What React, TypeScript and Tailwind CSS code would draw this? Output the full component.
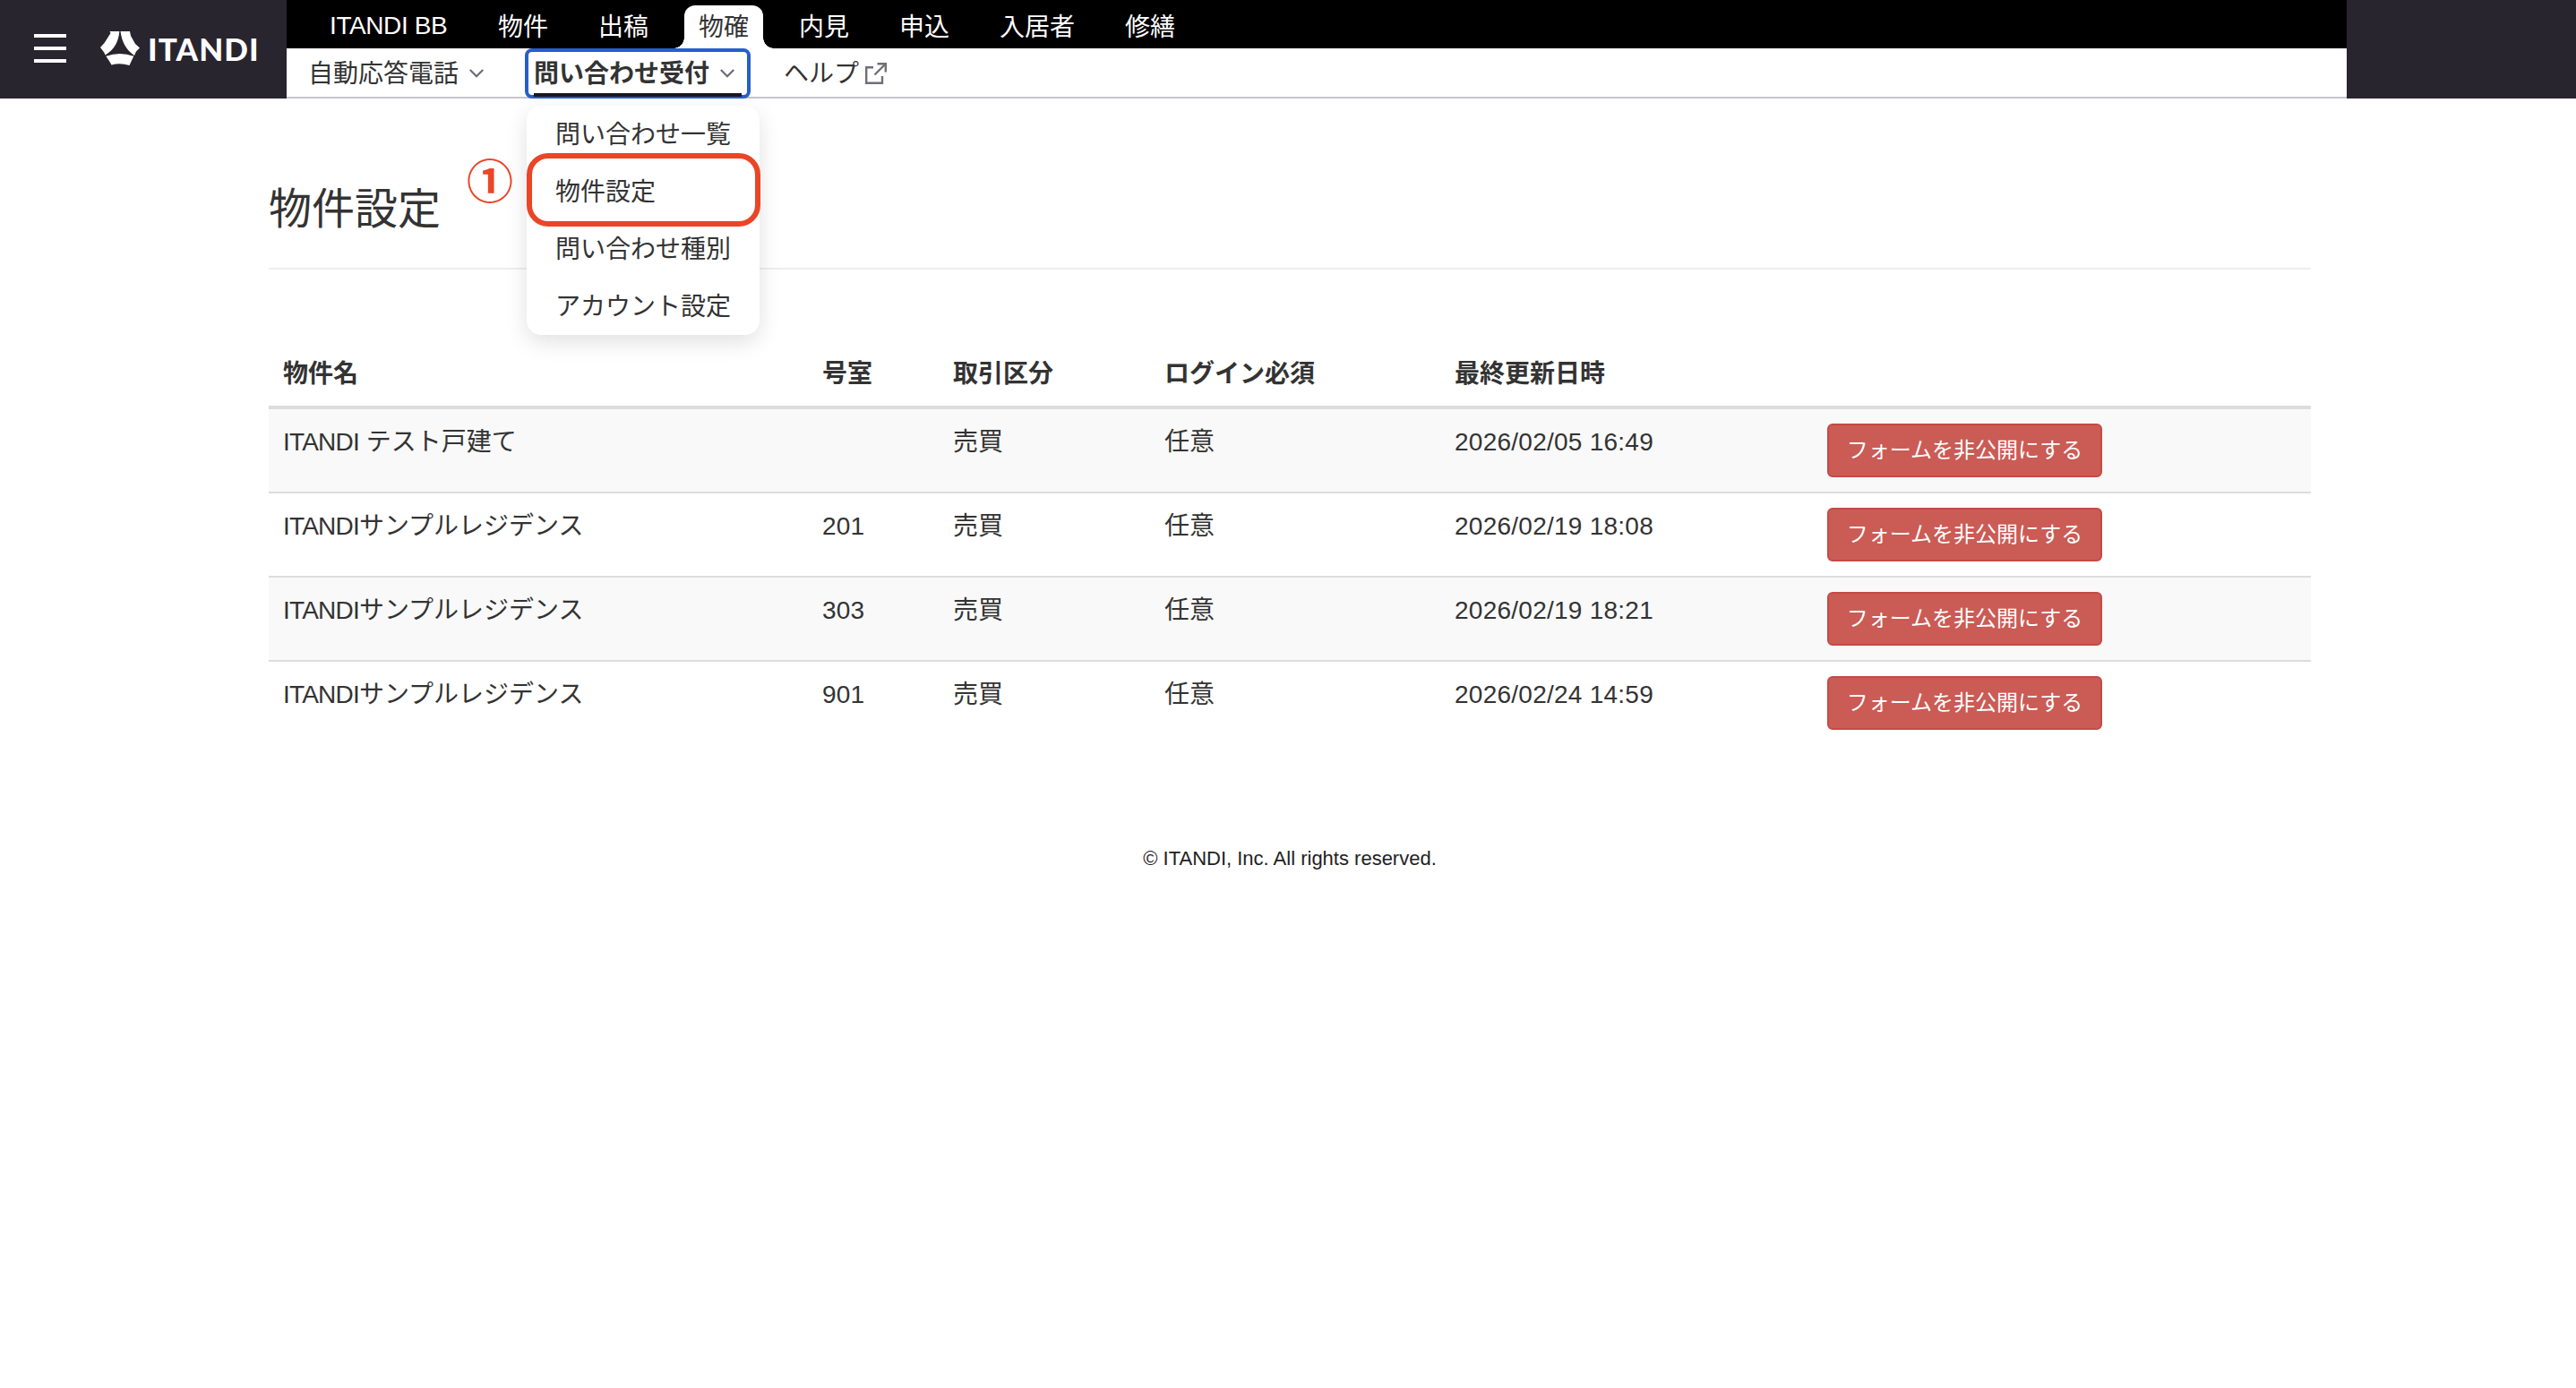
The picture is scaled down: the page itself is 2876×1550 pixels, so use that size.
import { clsx } from "clsx";

const tabs = ["物件", "出稿", "物確", "内見", "申込", "入居者", "修繕"];
const activeTab = "物確";

const menuItems = ["問い合わせ一覧", "物件設定", "問い合わせ種別", "アカウント設定"];

const columns = ["物件名", "号室", "取引区分", "ログイン必須", "最終更新日時", ""];

const rows = [
    { brand: "ITANDI", name: " テスト戸建て", room: "", type: "売買", login: "任意", updatedAt: "2026/02/05 16:49" },
    { brand: "ITANDI", name: "サンプルレジデンス", room: "201", type: "売買", login: "任意", updatedAt: "2026/02/19 18:08" },
    { brand: "ITANDI", name: "サンプルレジデンス", room: "303", type: "売買", login: "任意", updatedAt: "2026/02/19 18:21" },
    { brand: "ITANDI", name: "サンプルレジデンス", room: "901", type: "売買", login: "任意", updatedAt: "2026/02/24 14:59" },
];

function Chevron() {
    return (
        <svg className="mt-px w-4 h-[10px] shrink-0" viewBox="0 0 16 10" fill="none" stroke="#6b6b78" strokeWidth="2.2">
            <path d="M0.8 1L8 8.2L15.2 1" />
        </svg>
    );
}

function ExternalLinkIcon() {
    return (
        <svg className="mt-px w-6 h-6 shrink-0" viewBox="0 0 24 24" fill="none" stroke="#6f6f78" strokeWidth="2.4">
            <path d="M9 5.200H1.2V22.8H19V15" />
            <path d="M10.500 13.500L22 2" />
            <path d="M13.500 1.2H22.8V10.500" />
        </svg>
    );
}

function Logo() {
    return (
        <div className="flex items-center">
            <svg className="-mt-[2px] w-11 h-[38px] shrink-0" viewBox="0 0 44 38" fill="#fff">
                <path d="M10.500 0H21.300C20.500 11 16 20 5.500 26.500L4.200 23.500L0 18L4.500 13L11.500 2Z" />
                <path d="M22.500 0H33L34 5L39 14L44 18.500L40 22.500L38 27C28 20 24 11 22.500 0Z" />
                <path d="M6.300 27.800Q22 22.300 37.300 27.800L35 32.500L32.500 38Q22 34.800 12.500 37.500L10.500 34Z" />
            </svg>
            <span className="ml-[9px] -mt-px font-['Lato',sans-serif] font-black text-[35px] leading-none tracking-[1.1px] text-white">
                ITANDI
            </span>
        </div>
    );
}

function Header() {
    return (
        <header className="flex h-[110px] bg-[#28252f]">
            <div className="flex w-80 items-center">
                <div className="-mt-[2px] ml-[38px] mr-[38px] flex w-9 shrink-0 flex-col gap-[10px]">
                    <span className="h-1 bg-white" />
                    <span className="h-1 bg-white" />
                    <span className="h-1 bg-white" />
                </div>
                <Logo />
            </div>

            <div className="flex w-[2300px] flex-col bg-white">
                {/* Product tabs */}
                <nav className="flex h-[54px] items-end bg-black pl-12 text-white">
                    <span className="w-[172px] leading-[50px] tracking-[-0.4px]">ITANDI BB</span>
                    {tabs.map((tab) => (
                        <div key={tab} className="relative px-4 mr-6 h-12 leading-[50px]">
                            {tab === activeTab && (
                                <>
                                    <span className="absolute inset-0 rounded-t-xl bg-white" />
                                    <span className="absolute -left-3 bottom-0 size-3 bg-[radial-gradient(circle_at_0_0,transparent_11.5px,#fff_12px)]" />
                                    <span className="absolute -right-3 bottom-0 size-3 bg-[radial-gradient(circle_at_100%_0,transparent_11.5px,#fff_12px)]" />
                                </>
                            )}
                            <span className={clsx("relative", tab === activeTab && "text-[#333]")}>{tab}</span>
                        </div>
                    ))}
                </nav>

                {/* Sub navigation */}
                <nav className="flex h-14 border-b-2 border-[#c7c6cd]">
                    <div className="ml-6 flex h-[54px] items-center gap-3">
                        <span className="pt-[3px]">自動応答電話</span>
                        <Chevron />
                    </div>
                    <div className="relative ml-[46px] h-14 w-[252px] rounded-lg border-4 border-[#255fcc] bg-white px-[6px]">
                        <div className="flex h-[46px] items-center gap-3 whitespace-nowrap">
                            <span className="pt-[3px] font-bold">問い合わせ受付</span>
                            <Chevron />
                        </div>
                        <div className="h-1 w-[232px] bg-[#1a1822]" />
                        <DropdownMenu />
                    </div>
                    <div className="ml-[37px] flex h-[54px] items-center gap-[7px]">
                        <span className="pt-[3px]">ヘルプ</span>
                        <ExternalLinkIcon />
                    </div>
                </nav>
            </div>
        </header>
    );
}

function DropdownMenu() {
    return (
        <div className="absolute left-[-2px] top-[60px] z-10 w-[260px] rounded-2xl bg-white shadow-[0_8px_24px_rgba(0,0,0,0.12)]">
            {menuItems.map((item) => (
                <div key={item} className="relative h-16 whitespace-nowrap pl-8 leading-[66px]">
                    {item}
                    {item === "物件設定" && (
                        <>
                            <span className="absolute left-0 -top-[11px] h-[82px] w-[261px] rounded-[24px] border-6 border-[#eb4527]" />
                            <span className="absolute -left-[67px] -top-[8px] text-[52px] font-bold leading-[60px] text-[#eb4527]">①</span>
                        </>
                    )}
                </div>
            ))}
        </div>
    );
}

function PropertyTable() {
    return (
        <table className="mt-[79px] w-full table-fixed border-collapse text-left">
            <colgroup>
                <col className="w-[602px]" />
                <col className="w-[146px]" />
                <col className="w-[236px]" />
                <col className="w-[324px]" />
                <col className="w-[416px]" />
                <col />
            </colgroup>
            <thead>
                <tr className="h-[75px] border-b-4 border-[#ddd]">
                    {columns.map((column) => (
                        <th key={column} className="px-4 pb-[15px] pt-4 align-bottom font-bold leading-10">
                            {column}
                        </th>
                    ))}
                </tr>
            </thead>
            <tbody>
                {rows.map((row) => (
                    <tr key={row.updatedAt} className="h-[94px] border-t-2 border-[#ddd] align-top leading-10 first:h-[95px] odd:bg-[#f9f9f9]">
                        <td className="px-4 pt-[17px]">
                            <span className="tracking-[-0.8px]">{row.brand}</span>
                            {row.name}
                        </td>
                        <td className="px-4 pt-[17px] tracking-[0.2px]">{row.room}</td>
                        <td className="px-4 pt-[17px]">{row.type}</td>
                        <td className="px-4 pt-[17px]">{row.login}</td>
                        <td className="px-4 pt-[17px] tracking-[0.25px]">{row.updatedAt}</td>
                        <td className="px-4 pt-4">
                            <button className="block h-[60px] w-[307px] whitespace-nowrap rounded-md border-2 border-[#c64a44] bg-[#cb5b55] text-2xl text-white">
                                フォームを非公開にする
                            </button>
                        </td>
                    </tr>
                ))}
            </tbody>
        </table>
    );
}

export default function App() {
    return (
        <div className="min-h-[1550px] bg-white font-['Liberation_Sans','Noto_Sans_CJK_JP',sans-serif] text-[28px] text-[#333]">
            <Header />
            <main className="ml-[300px] w-[2280px]">
                <h1 className="h-[191px] border-b-2 border-[#eee] pt-[94px] text-5xl leading-[60px]">物件設定</h1>
                <PropertyTable />
            </main>
            <footer className="mt-[112px] pl-1 text-center text-[22px] leading-[30px] text-[#222]">
                © ITANDI, Inc. All rights reserved.
            </footer>
        </div>
    );
}
